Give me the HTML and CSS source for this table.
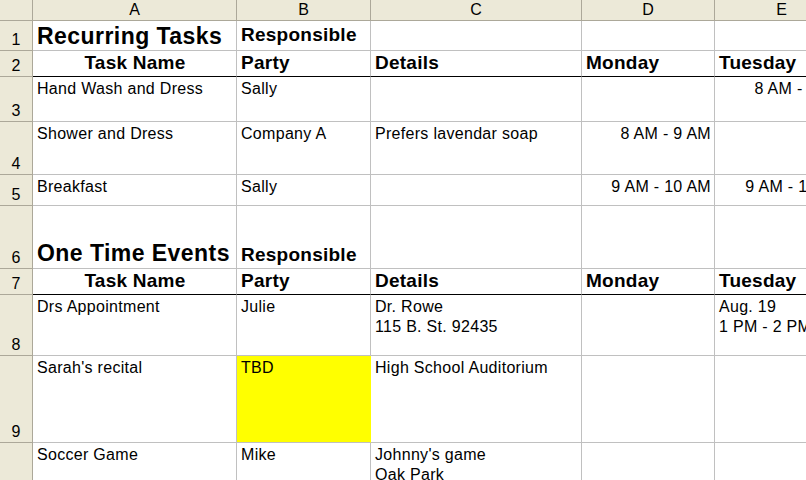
FILE: index.html
```html
<!DOCTYPE html>
<html>
<head>
<meta charset="utf-8">
<link rel="stylesheet" href="styles.css">
</head>
<body>
<div class="sheet">
  <div class="hd corner"></div>
  <div class="hd">A</div>
  <div class="hd">B</div>
  <div class="hd">C</div>
  <div class="hd">D</div>
  <div class="hd">E</div>

  <div class="rh">1</div>
  <div class="c h title">Recurring Tasks</div>
  <div class="c h sub hi">Responsible</div>
  <div class="c"></div>
  <div class="c"></div>
  <div class="c"></div>

  <div class="rh">2</div>
  <div class="c h sub ctr thick">Task Name</div>
  <div class="c h sub thick">Party</div>
  <div class="c h sub thick">Details</div>
  <div class="c h sub thick">Monday</div>
  <div class="c h sub thick">Tuesday</div>

  <div class="rh">3</div>
  <div class="c">Hand Wash and Dress</div>
  <div class="c">Sally</div>
  <div class="c"></div>
  <div class="c"></div>
  <div class="c r">8 AM - 9 AM</div>

  <div class="rh">4</div>
  <div class="c">Shower and Dress</div>
  <div class="c">Company A</div>
  <div class="c">Prefers lavendar soap</div>
  <div class="c r">8 AM - 9 AM</div>
  <div class="c"></div>

  <div class="rh">5</div>
  <div class="c">Breakfast</div>
  <div class="c">Sally</div>
  <div class="c"></div>
  <div class="c r">9 AM - 10 AM</div>
  <div class="c r">9 AM - 10 AM</div>

  <div class="rh">6</div>
  <div class="c h title lo">One Time Events</div>
  <div class="c h sub">Responsible</div>
  <div class="c"></div>
  <div class="c"></div>
  <div class="c"></div>

  <div class="rh">7</div>
  <div class="c h sub ctr thick">Task Name</div>
  <div class="c h sub thick">Party</div>
  <div class="c h sub thick">Details</div>
  <div class="c h sub thick">Monday</div>
  <div class="c h sub thick">Tuesday</div>

  <div class="rh">8</div>
  <div class="c">Drs Appointment</div>
  <div class="c">Julie</div>
  <div class="c">Dr. Rowe<br>115 B. St. 92435</div>
  <div class="c"></div>
  <div class="c">Aug. 19<br>1 PM - 2 PM</div>

  <div class="rh">9</div>
  <div class="c">Sarah's recital</div>
  <div class="c yellow">TBD</div>
  <div class="c">High School Auditorium</div>
  <div class="c"></div>
  <div class="c"></div>

  <div class="rh">10</div>
  <div class="c">Soccer Game</div>
  <div class="c">Mike</div>
  <div class="c">Johnny's game<br>Oak Park</div>
  <div class="c"></div>
  <div class="c"></div>
</div>
</body>
</html>
```

FILE: styles.css
```css
html, body {
  margin: 0;
  padding: 0;
  background: #ffffff;
  overflow: hidden;
}

.sheet {
  display: grid;
  grid-template-columns: 33px 204px 134px 211px 133px 134px;
  grid-template-rows: 21px 30px 26px 45px 53px 31px 63px 26px 61px 87px 60px;
  width: 849px;
  font-family: "Liberation Sans", Arial, sans-serif;
  font-size: 16px;
  color: #000;
}

.sheet > div {
  box-sizing: border-box;
  overflow: hidden;
  white-space: nowrap;
}

.hd {
  background: #ece9d8;
  border-right: 1px solid #aca899;
  border-bottom: 1px solid #aca899;
  display: flex;
  align-items: center;
  justify-content: center;
  line-height: 18px;
}

.rh {
  background: #ece9d8;
  border-right: 1px solid #aca899;
  border-bottom: 1px solid #aca899;
  display: flex;
  align-items: flex-end;
  justify-content: center;
  line-height: 18px;
  padding-bottom: 1px;
}

.c {
  border-right: 1px solid #c0c0c0;
  border-bottom: 1px solid #c0c0c0;
  padding: 2px 3px 0 4px;
  line-height: 20px;
  letter-spacing: 0.3px;
}

.c.r {
  text-align: right;
  padding-right: 3px;
}

.c.h {
  display: flex;
  align-items: flex-end;
  font-weight: bold;
  line-height: normal;
  padding-top: 0;
  padding-bottom: 2px;
  letter-spacing: 0.25px;
}

.c.title {
  font-size: 23px;
  padding-bottom: 0;
  letter-spacing: 0.45px;
}

.c.title.lo {
  padding-bottom: 1px;
}

.c.sub {
  font-size: 19px;
}

.c.hi {
  padding-bottom: 4px;
}

.c.ctr {
  justify-content: center;
}

.c.thick {
  border-bottom: 1px solid #000;
}

.c.yellow {
  background: #ffff00;
  border-right-color: #ffff00;
}
```
